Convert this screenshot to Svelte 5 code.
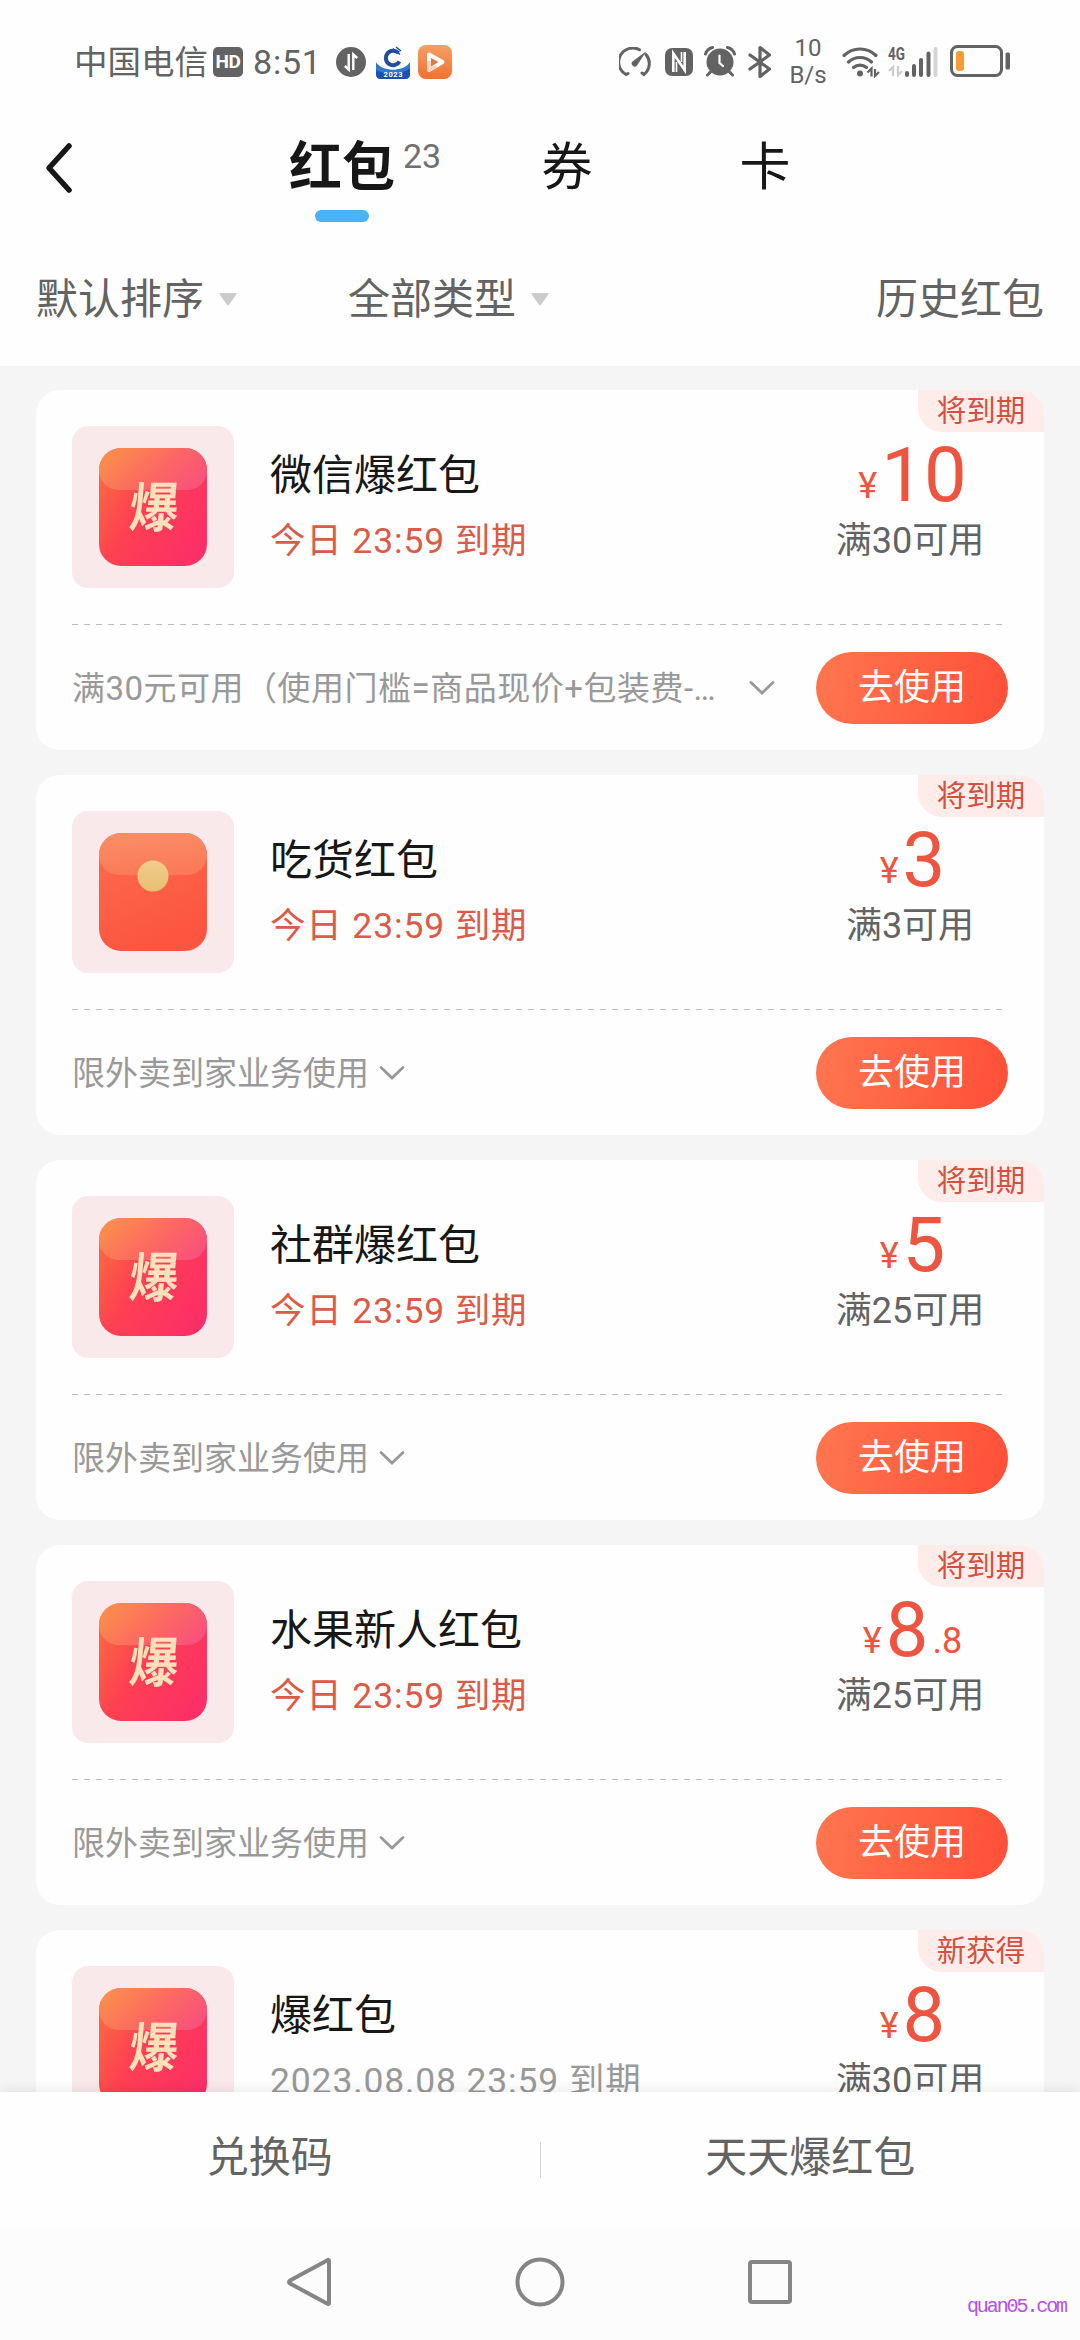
<script lang="ts">
	type CouponKind = 'burst' | 'envelope';

	interface Coupon {
		kind: CouponKind;
		title: string;
		expiry: string;
		urgent: boolean;
		tag: string;
		amount: string;
		decimal?: string;
		limit: string;
		rule: string;
		wide?: boolean;
	}

	const tabs = [
		{ label: '红包', count: 23 },
		{ label: '券' },
		{ label: '卡' }
	];

	const filters = ['默认排序', '全部类型'];

	const coupons: Coupon[] = [
		{
			kind: 'burst', title: '微信爆红包', expiry: '今日 23:59 到期', urgent: true, tag: '将到期',
			amount: '10', limit: '满30可用', rule: '满30元可用（使用门槛=商品现价+包装费-…', wide: true
		},
		{
			kind: 'envelope', title: '吃货红包', expiry: '今日 23:59 到期', urgent: true, tag: '将到期',
			amount: '3', limit: '满3可用', rule: '限外卖到家业务使用'
		},
		{
			kind: 'burst', title: '社群爆红包', expiry: '今日 23:59 到期', urgent: true, tag: '将到期',
			amount: '5', limit: '满25可用', rule: '限外卖到家业务使用'
		},
		{
			kind: 'burst', title: '水果新人红包', expiry: '今日 23:59 到期', urgent: true, tag: '将到期',
			amount: '8', decimal: '.8', limit: '满25可用', rule: '限外卖到家业务使用'
		},
		{
			kind: 'burst', title: '爆红包', expiry: '2023.08.08 23:59 到期', urgent: false, tag: '新获得',
			amount: '8', limit: '满30可用', rule: '限外卖到家业务使用'
		}
	];

	let activeTab = $state(0);
</script>

<div class="page">
	<div class="status-bar">
		<div class="status-left">
			<span class="carrier">中国电信</span>
			<span class="hd">HD</span>
			<span class="clock">8:51</span>
			<svg class="status-data" width="30" height="30" viewBox="0 0 30 30">
				<circle cx="15" cy="15" r="15" fill="#636363" />
				<path d="M12.7 7v15.5L8.8 19M17.3 23V7.5l3.9 3.5" fill="none" stroke="#fff" stroke-width="2.4" />
			</svg>
			<svg class="status-bank" width="34" height="34" viewBox="0 0 34 34">
				<path d="M0 17c5 10 29 10 34 0v12q0 5-5 5H5q-5 0-5-5z" fill="#2c78d4" />
				<path d="M0 25c8 5 26 5 34-2v6q0 5-5 5H5q-5 0-5-5z" fill="#1c51b4" />
				<circle cx="17" cy="14" r="10.500" fill="#fff" />
				<path d="M22.500 8A7.300 7.300 0 1 0 23.500 16.500" fill="none" stroke="#1f4f9c" stroke-width="4" />
				<path d="M17 9l4 4-4 4-4-4z" fill="#fff" />
				<path d="M17 3.500l7 6M20 2l5 4" stroke="#1f4f9c" stroke-width="1.600" />
				<text x="17" y="32" text-anchor="middle" font-size="7.5" font-weight="700" fill="#fff" textLength="19">2023</text>
			</svg>
			<svg class="status-video" width="34" height="34" viewBox="0 0 34 34">
				<defs>
					<linearGradient id="videoBg" x1="0" y1="0" x2="0" y2="1">
						<stop offset="0" stop-color="#f5a066" />
						<stop offset="1" stop-color="#f07132" />
					</linearGradient>
				</defs>
				<rect width="34" height="34" rx="8" fill="url(#videoBg)" />
				<path d="M11 9.5L24.5 17 11 25z" fill="#e5763f" stroke="#fff" stroke-width="4" stroke-linejoin="round" />
				<path d="M11 16v9l7-4" fill="none" stroke="#fbd3bc" stroke-width="3.5" stroke-linejoin="round" />
			</svg>
		</div>

		<div class="status-right">
			<svg width="32" height="30" viewBox="0 0 32 30">
				<path d="M9 26.5l-2 1A14 14 0 0 1 20.5 2.8M27 7.5a14 14 0 0 1-2 20l-2-1.5" fill="none" stroke="#636363" stroke-width="3" stroke-linecap="round" />
				<path d="M27.5 4L18 18.5a3 3 0 0 1-4.5-4z" fill="#636363" />
			</svg>
			<svg class="nfc" width="28" height="28" viewBox="0 0 28 28">
				<rect width="28" height="28" rx="7" fill="#636363" />
				<path d="M8.300 24V5.500L19.700 22V4" fill="none" stroke="#fff" stroke-width="2.600" />
				<path d="M11.500 24V14M16.500 4v10" stroke="#fff" stroke-width="1.600" />
			</svg>
			<svg class="alarm" width="32" height="31" viewBox="0 0 32 31">
				<circle cx="16" cy="16" r="13.500" fill="#636363" />
				<path d="M1.500 8Q3 3 8.500 1.500M30.500 8Q29 3 23.500 1.500M6.500 26L3.500 29M25.500 26l3 3" fill="none" stroke="#636363" stroke-width="3" stroke-linecap="round" />
				<path d="M15.500 9.500V17l3.500 3" fill="none" stroke="#fff" stroke-width="2.200" stroke-linecap="round" />
			</svg>
			<svg class="bluetooth" width="24" height="34" viewBox="0 0 24 34">
				<path d="M2 10l19.500 14L12 31.500V2.500L21.500 10 2 24" fill="none" stroke="#636363" stroke-width="3.200" stroke-linecap="round" stroke-linejoin="round" />
			</svg>
			<span class="speed"><span>10</span><span>B/s</span></span>
			<svg class="wifi" width="38" height="32" viewBox="0 0 38 32">
				<path d="M2 9.500a23 23 0 0 1 32 0M6.500 16a17 17 0 0 1 23 0M11.500 21.500a10 10 0 0 1 13 0" fill="none" stroke="#636363" stroke-width="3.200" stroke-linecap="round" />
				<circle cx="18" cy="27.500" r="3" fill="#636363" />
				<path d="M25.500 26.500l4-4v8M33 23v7l4-4" fill="none" stroke="#636363" stroke-width="2.200" />
			</svg>
			<svg class="signal" width="51" height="32" viewBox="0 0 51 32">
				<text x="0" y="14" font-size="18" font-weight="700" fill="#636363" textLength="17" lengthAdjust="spacingAndGlyphs">4G</text>
				<path d="M1 25l4-4v9M10 20v9l4-4" fill="none" stroke="#ccc" stroke-width="2.200" />
				<path d="M19 27v2M26 20v9M33 14v15M40.500 7.500V29" stroke="#636363" stroke-width="4" stroke-linecap="round" />
				<path d="M47.500 3v26" stroke="#d5d5d5" stroke-width="4" stroke-linecap="round" />
			</svg>
			<svg class="battery" width="61" height="33" viewBox="0 0 61 33">
				<rect x="1.500" y="1.500" width="50" height="29" rx="6" fill="none" stroke="#636363" stroke-width="3" />
				<rect x="6" y="6" width="8" height="20" rx="3" fill="#f89b35" />
				<rect x="55.500" y="7.500" width="4.500" height="17" rx="1.500" fill="#636363" />
			</svg>
		</div>
	</div>

	<header class="nav">
		<svg class="back" width="30" height="52" viewBox="0 0 30 52">
			<path d="M25 4L5 26l20 22" fill="none" stroke="#171717" stroke-width="5.500" stroke-linecap="round" stroke-linejoin="round" />
		</svg>
		{#each tabs as tab, i}
			<button class="tab" class:active={i === activeTab} onclick={() => (activeTab = i)}>
				{tab.label}
				{#if tab.count}<span class="tab-count">{tab.count}</span>{/if}
			</button>
		{/each}
	</header>

	<div class="filters">
		{#each filters as filter}
			<button class="filter">
				{filter}
				<svg width="18" height="13" viewBox="0 0 18 13"><path d="M1.500 1h15L9 11.500z" fill="#ccc" stroke="#ccc" stroke-width="2" stroke-linejoin="round" /></svg>
			</button>
		{/each}
		<button class="filter history">历史红包</button>
	</div>

	<main class="list">
		<svg class="defs" width="0" height="0">
			<defs>
				<linearGradient id="burst" x1="0" y1="0.2" x2="1" y2="0.8">
					<stop offset="0" stop-color="#fb6a40" />
					<stop offset="0.4" stop-color="#fe4052" />
					<stop offset="1" stop-color="#fc2e68" />
				</linearGradient>
				<linearGradient id="burstFlap" x1="0" y1="0.2" x2="1" y2="0.6">
					<stop offset="0" stop-color="#fb904c" />
					<stop offset="0.55" stop-color="#fc6a60" />
					<stop offset="1" stop-color="#f9527b" />
				</linearGradient>
				<linearGradient id="envelope" x1="0" y1="0" x2="0.4" y2="1">
					<stop offset="0" stop-color="#fb6d4d" />
					<stop offset="1" stop-color="#fd5540" />
				</linearGradient>
				<linearGradient id="envelopeFlap" x1="0" y1="0" x2="0.2" y2="1">
					<stop offset="0" stop-color="#f98f66" />
					<stop offset="1" stop-color="#fb7a58" />
				</linearGradient>
				<linearGradient id="coin" x1="0" y1="0" x2="0" y2="1">
					<stop offset="0" stop-color="#f1cd8c" />
					<stop offset="1" stop-color="#e5bf72" />
				</linearGradient>
			</defs>
		</svg>

		{#each coupons as coupon}
			<article class="card">
				<span class="tag">{coupon.tag}</span>
				<div class="card-top">
					<div class="thumb">
						<svg width="110" height="120" viewBox="0 0 110 120">
							<rect x="1" y="1" width="108" height="118" rx="22" fill="url(#{coupon.kind})" />
							<path d="M23 1h64a22 22 0 0 1 22 22a20 20 0 0 1-20 20H21a20 20 0 0 1-20-20A22 22 0 0 1 23 1z" fill="url(#{coupon.kind}Flap)" />
							{#if coupon.kind === 'burst'}
								<text class="burst-char" transform="translate(30 80) skewX(-5) scale(0.96 1.05)">爆</text>
							{:else}
								<circle cx="55" cy="44" r="15.500" fill="url(#coin)" />
							{/if}
						</svg>
					</div>
					<div class="info">
						<h2>{coupon.title}</h2>
						<p class:urgent={coupon.urgent}>{coupon.expiry}</p>
					</div>
					<div class="value">
						<div class="price">
							<span class="yen">¥</span><span class="amount">{coupon.amount}</span>{#if coupon.decimal}<span class="decimal">{coupon.decimal}</span>{/if}
						</div>
						<div class="limit">{coupon.limit}</div>
					</div>
				</div>
				<div class="divider"></div>
				<div class="card-bottom">
					<div class="rule" class:wide={coupon.wide}>
						<span>{coupon.rule}</span>
						<svg width="28" height="18" viewBox="0 0 28 18">
							<path d="M3 3.500l11 10.500L25 3.500" fill="none" stroke="#999" stroke-width="2.800" stroke-linecap="round" />
						</svg>
					</div>
					<button class="use">去使用</button>
				</div>
			</article>
		{/each}
	</main>

	<footer class="actions">
		<button>兑换码</button>
		<span class="separator"></span>
		<button>天天爆红包</button>
	</footer>

	<div class="system-nav">
		<svg width="50" height="56" viewBox="0 0 50 56">
			<path d="M44 7v42q0 2-2 .5L5 29.500q-2-1.500 0-3L42 6.500Q44 5 44 7z" fill="none" stroke="#858585" stroke-width="4" stroke-linejoin="round" />
		</svg>
		<svg width="50" height="56" viewBox="0 0 50 56">
			<circle cx="25" cy="28" r="22.500" fill="none" stroke="#858585" stroke-width="4" />
		</svg>
		<svg width="50" height="56" viewBox="0 0 50 56">
			<rect x="5" y="8" width="40" height="40" rx="2" fill="none" stroke="#858585" stroke-width="4" />
		</svg>
		<span class="watermark">quan05.com</span>
	</div>
</div>

<style>
	:global(body) {
		background: #fff;
	}

	.page {
		display: flex;
		flex-direction: column;
		width: 1080px;
		height: 2340px;
		overflow: hidden;
		background: #fefefe;
		color: #171717;
		font-family: Roboto, 'Noto Sans CJK SC', sans-serif;
	}

	svg {
		display: block;
		flex: none;
	}

	button {
		padding: 0;
		border: none;
		background: none;
		color: inherit;
		font: inherit;
	}

	h2,
	p {
		margin: 0;
		font-weight: 400;
	}

	.status-bar {
		display: flex;
		justify-content: space-between;
		height: 122px;
		padding: 0 69px 0 74px;
		box-sizing: border-box;
		color: #636363;
	}

	.status-left,
	.status-right {
		display: flex;
		align-items: center;
		height: 123px;
	}

	.carrier {
		padding-top: 2px;
		font-size: 33.5px;
		line-height: 40px;
	}

	.hd {
		width: 30px;
		height: 30px;
		margin-left: 5px;
		border-radius: 5px;
		background: #636363;
		color: #fff;
		font-size: 19px;
		font-weight: 700;
		line-height: 30px;
		text-align: center;
		letter-spacing: -0.5px;
	}

	.clock {
		margin-left: 10px;
		font-size: 34px;
		line-height: 40px;
		letter-spacing: 0.8px;
	}

	.status-data {
		margin-left: 14px;
	}

	.status-bank {
		margin-left: 10px;
	}

	.status-video {
		margin-left: 8px;
	}

	.nfc {
		margin-left: 14px;
	}

	.alarm {
		margin-left: 11px;
	}

	.bluetooth {
		margin-left: 12px;
	}

	.speed {
		display: flex;
		flex-direction: column;
		width: 38px;
		margin-left: 17px;
		font-size: 24px;
		line-height: 27px;
		text-align: center;
	}

	.wifi {
		margin-left: 15px;
	}

	.signal {
		margin-left: 8px;
		overflow: visible;
	}

	.battery {
		margin-left: 11px;
	}

	.nav {
		display: grid;
		grid-template-columns: 242px 200px 250px 146px;
		align-items: start;
		height: 122px;
	}

	.back {
		margin: 20px 0 0 44px;
	}

	.tab {
		position: relative;
		justify-self: center;
		padding: 16px 0 12px;
		font-size: 51px;
		line-height: 60px;
	}

	.tab.active {
		font-size: 53px;
		font-weight: 700;
	}

	.tab.active::after {
		content: '';
		position: absolute;
		left: 50%;
		bottom: -12px;
		width: 54px;
		height: 12px;
		margin-left: -27px;
		border-radius: 6px;
		background: #4ab3f8;
	}

	.tab-count {
		position: absolute;
		left: 100%;
		top: 14px;
		margin-left: 8px;
		color: #707070;
		font-size: 34px;
		font-weight: 400;
		line-height: 40px;
	}

	.filters {
		display: flex;
		align-items: center;
		height: 122px;
		padding: 2px 36px 13px;
		box-sizing: border-box;
	}

	.filter {
		display: flex;
		align-items: center;
		gap: 15px;
		width: 312px;
		color: #636363;
		font-size: 42px;
		line-height: 50px;
	}

	.history {
		width: auto;
		margin-left: auto;
	}

	.list {
		flex: 1;
		display: flex;
		flex-direction: column;
		gap: 25px;
		min-height: 0;
		padding: 24px 36px 0;
		overflow: hidden;
		background: #f5f5f5;
	}

	.defs {
		position: absolute;
	}

	.card {
		position: relative;
		flex: none;
		height: 360px;
		padding: 36px 36px 0;
		border-radius: 24px;
		box-sizing: border-box;
		background: #fefefe;
		overflow: hidden;
	}

	.tag {
		position: absolute;
		top: 0;
		right: 0;
		width: 126px;
		height: 42px;
		border-radius: 0 0 0 24px;
		background: #fdecea;
		color: #d5503f;
		font-size: 29.5px;
		line-height: 43px;
		text-align: center;
	}

	.card-top {
		display: flex;
		height: 198px;
	}

	.thumb {
		display: flex;
		align-items: center;
		justify-content: center;
		width: 162px;
		height: 162px;
		border-radius: 16px;
		background: #fae9eb;
	}

	.burst-char {
		fill: #fee0bb;
		font-family: 'Noto Sans CJK SC', sans-serif;
		font-size: 51px;
		font-weight: 700;
	}

	.info {
		flex: 1;
		padding: 22px 0 0 36px;
	}

	.info h2 {
		font-size: 42px;
		line-height: 56px;
	}

	.info p {
		margin-top: 13px;
		color: #999;
		font-size: 35.5px;
		line-height: 48px;
		letter-spacing: 0.85px;
	}

	.info p.urgent {
		color: #dc5a48;
	}

	.value {
		width: 196px;
		text-align: center;
	}

	.price {
		display: flex;
		align-items: baseline;
		justify-content: center;
		height: 87px;
		padding: 4px 0 0 5px;
		color: #ee5540;
		line-height: 90px;
	}

	.yen,
	.decimal {
		position: relative;
		top: -3px;
		font-size: 36px;
	}

	.decimal {
		margin-left: 4px;
	}

	.amount {
		margin-left: 4px;
		font-size: 76px;
	}

	.limit {
		color: #636363;
		font-size: 36px;
		line-height: 48px;
	}

	.divider {
		width: 932px;
		height: 1px;
		background: repeating-linear-gradient(90deg, #bbb 0 6px, transparent 6px 12px);
	}

	.card-bottom {
		display: flex;
		align-items: center;
		justify-content: space-between;
		height: 126px;
	}

	.rule {
		display: flex;
		align-items: center;
		gap: 9px;
		color: #999;
		font-size: 33px;
		line-height: 44px;
		white-space: nowrap;
	}

	.rule span {
		padding-top: 1px;
	}

	.rule.wide {
		justify-content: space-between;
		width: 704px;
		letter-spacing: 0.5px;
	}

	.use {
		width: 192px;
		height: 72px;
		border-radius: 36px;
		background: linear-gradient(100deg, #ff764f, #ff4f38);
		color: #fff;
		font-size: 36px;
		line-height: 68px;
	}

	.actions {
		position: relative;
		display: flex;
		align-items: center;
		height: 136px;
		background: #fefefe;
		box-shadow: 0 -2px 12px rgba(0, 0, 0, 0.08);
	}

	.actions button {
		flex: 1;
		padding-bottom: 5px;
		color: #636363;
		font-size: 42px;
		line-height: 50px;
	}

	.separator {
		width: 1px;
		height: 36px;
		background: #d5d5d5;
	}

	.system-nav {
		position: relative;
		display: flex;
		justify-content: center;
		gap: 180px;
		height: 86px;
		padding-top: 26px;
		background: #fcfcfc;
	}

	.watermark {
		position: absolute;
		right: 14px;
		bottom: 21px;
		color: #b650ee;
		font-family: 'Liberation Mono', monospace;
		font-size: 20px;
		letter-spacing: -2.1px;
		line-height: 24px;
	}
</style>
